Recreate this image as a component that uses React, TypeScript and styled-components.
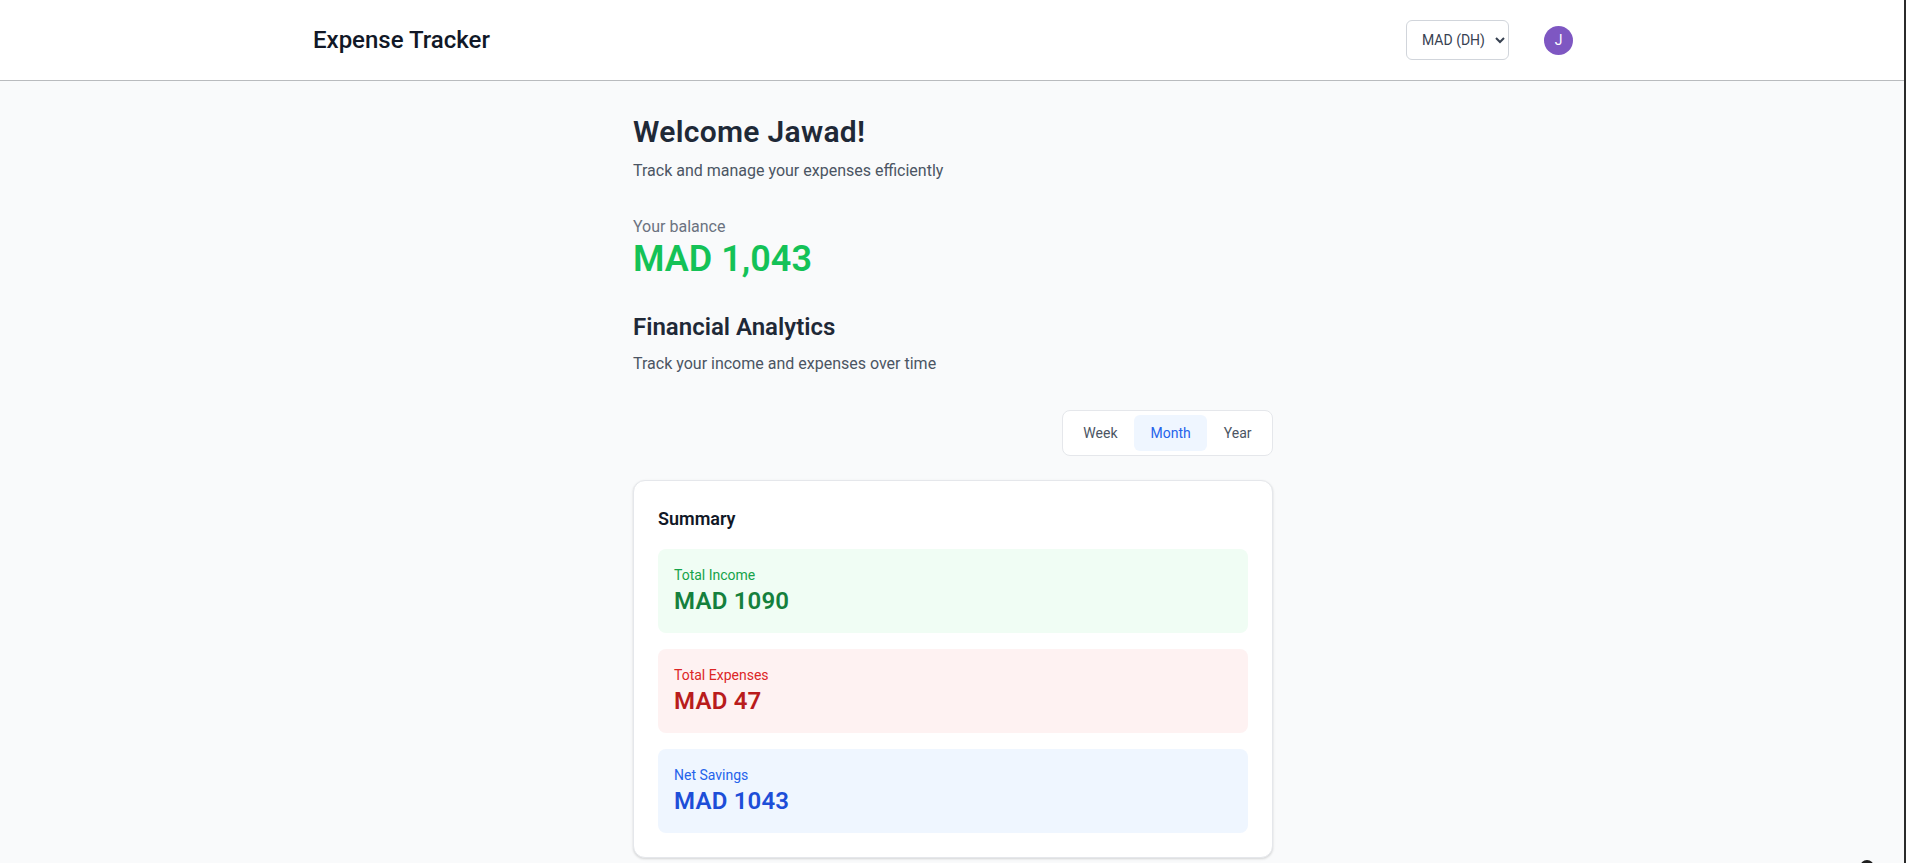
import { useState } from "react";
import styled, { createGlobalStyle } from "styled-components";

const GlobalStyle = createGlobalStyle`
  * { box-sizing: border-box; }
  body {
    margin: 0;
    background: #f9fafb;
    font-family: Roboto, "Liberation Sans", Arial, sans-serif;
    color: #1f2937;
  }
`;

const Header = styled.header`
  background: #fff;
  border-bottom: 1px solid #b9bbbe;
`;

const HeaderInner = styled.div`
  max-width: 1280px;
  height: 80px;
  margin: 0 auto;
  display: flex;
  align-items: center;
  justify-content: space-between;
`;

const Logo = styled.h1`
  margin: 0;
  font-size: 24px;
  line-height: 32px;
  font-weight: 500;
  color: #111827;
`;

const HeaderActions = styled.div`
  display: flex;
  align-items: center;
  gap: 35px;
  padding-right: 20px;
`;

const CurrencySelect = styled.select`
  height: 40px;
  width: 103px;
  padding: 0 6px 0 11px;
  border: 1px solid #d1d5db;
  border-radius: 6px;
  background: #fff;
  font-family: inherit;
  font-size: 14px;
  color: #374151;
  outline: none;
`;

const Avatar = styled.div`
  width: 29px;
  height: 29px;
  border-radius: 50%;
  background: #7e57c2;
  color: #fff;
  font-size: 14px;
  display: flex;
  align-items: center;
  justify-content: center;
`;

const Main = styled.main`
  max-width: 640px;
  margin: 0 auto;
  padding: 33px 0 32px;
`;

const Title = styled.h2`
  margin: 0;
  font-size: 30px;
  line-height: 36px;
  font-weight: 600;
  letter-spacing: 0.3px;
  color: #1f2937;
`;

const Subtitle = styled.p`
  margin: 9px 0 0;
  font-size: 16px;
  line-height: 24px;
  color: #4b5563;
`;

const Balance = styled.section`
  margin-top: 32px;
`;

const BalanceLabel = styled.div`
  font-size: 16px;
  line-height: 24px;
  color: #6b7280;
`;

const BalanceAmount = styled.div`
  font-size: 36px;
  line-height: 40px;
  font-weight: 600;
  color: #14c257;
`;

const Section = styled.section`
  margin-top: 32px;
`;

const SectionTitle = styled.h3`
  margin: 0;
  font-size: 24px;
  line-height: 32px;
  font-weight: 600;
  color: #1f2937;
`;

const PeriodRow = styled.div`
  margin-top: 34px;
  display: flex;
  justify-content: flex-end;
`;

const PeriodGroup = styled.div`
  display: inline-flex;
  padding: 4px;
  background: #fff;
  border: 1px solid #e5e7eb;
  border-radius: 8px;
`;

const PeriodButton = styled.button<{ $active?: boolean }>`
  border: 0;
  padding: 8px 16.5px;
  border-radius: 6px;
  font-family: inherit;
  font-size: 14px;
  line-height: 20px;
  cursor: pointer;
  background: ${(p) => (p.$active ? "#eff6ff" : "transparent")};
  color: ${(p) => (p.$active ? "#2563eb" : "#4b5563")};
`;

const Card = styled.div`
  margin-top: 24px;
  background: #fff;
  border: 1px solid #e5e7eb;
  border-radius: 12px;
  padding: 24px;
  box-shadow: 0 1px 3px rgba(0, 0, 0, 0.1), 0 1px 2px rgba(0, 0, 0, 0.06);
`;

const CardTitle = styled.h4`
  margin: 0 0 16px;
  font-size: 18px;
  line-height: 28px;
  font-weight: 600;
  color: #111827;
`;

const StatList = styled.div`
  display: flex;
  flex-direction: column;
  gap: 16px;
`;

const tones = {
  green: { bg: "#f0fdf4", label: "#16a34a", value: "#15803d" },
  red: { bg: "#fef2f2", label: "#dc2626", value: "#b91c1c" },
  blue: { bg: "#eff6ff", label: "#2563eb", value: "#1d4ed8" },
};

type Tone = keyof typeof tones;

const StatBox = styled.div<{ $tone: Tone }>`
  padding: 16px;
  border-radius: 8px;
  background: ${(p) => tones[p.$tone].bg};
`;

const StatLabel = styled.div<{ $tone: Tone }>`
  font-size: 14px;
  line-height: 20px;
  color: ${(p) => tones[p.$tone].label};
`;

const StatValue = styled.div<{ $tone: Tone }>`
  font-size: 24px;
  line-height: 32px;
  font-weight: 600;
  letter-spacing: 0.2px;
  color: ${(p) => tones[p.$tone].value};
`;

const EdgeLine = styled.div`
  position: fixed;
  top: 0;
  right: 0;
  bottom: 0;
  width: 2px;
  background: #2b2b2b;
`;

const FloatingDot = styled.div`
  position: fixed;
  right: 32px;
  bottom: -11px;
  width: 14px;
  height: 14px;
  border-radius: 50%;
  background: #1f1f1f;
`;

const stats: { label: string; value: string; tone: Tone }[] = [
  { label: "Total Income", value: "MAD 1090", tone: "green" },
  { label: "Total Expenses", value: "MAD 47", tone: "red" },
  { label: "Net Savings", value: "MAD 1043", tone: "blue" },
];

export default function App() {
  const [period, setPeriod] = useState("Month");

  return (
    <>
      <GlobalStyle />
      <Header>
        <HeaderInner>
          <Logo>Expense Tracker</Logo>
          <HeaderActions>
            <CurrencySelect defaultValue="MAD">
              <option value="MAD">MAD (DH)</option>
              <option value="USD">USD ($)</option>
              <option value="EUR">EUR (€)</option>
            </CurrencySelect>
            <Avatar>J</Avatar>
          </HeaderActions>
        </HeaderInner>
      </Header>

      <Main>
        <Title>Welcome Jawad!</Title>
        <Subtitle>Track and manage your expenses efficiently</Subtitle>

        <Balance>
          <BalanceLabel>Your balance</BalanceLabel>
          <BalanceAmount>MAD 1,043</BalanceAmount>
        </Balance>

        <Section>
          <SectionTitle>Financial Analytics</SectionTitle>
          <Subtitle>Track your income and expenses over time</Subtitle>
        </Section>

        <PeriodRow>
          <PeriodGroup>
            {["Week", "Month", "Year"].map((p) => (
              <PeriodButton key={p} $active={period === p} onClick={() => setPeriod(p)}>
                {p}
              </PeriodButton>
            ))}
          </PeriodGroup>
        </PeriodRow>

        <Card>
          <CardTitle>Summary</CardTitle>
          <StatList>
            {stats.map((s) => (
              <StatBox key={s.label} $tone={s.tone}>
                <StatLabel $tone={s.tone}>{s.label}</StatLabel>
                <StatValue $tone={s.tone}>{s.value}</StatValue>
              </StatBox>
            ))}
          </StatList>
        </Card>
      </Main>

      <EdgeLine />
      <FloatingDot />
    </>
  );
}
